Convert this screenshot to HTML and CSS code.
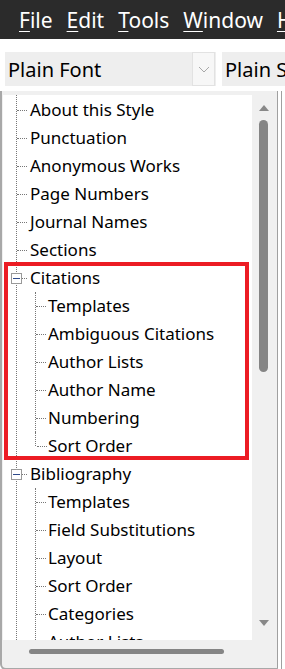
FILE: index.html
```html
<!DOCTYPE html>
<html lang="en">
<head>
    <meta charset="UTF-8">
    <title>Style Editor</title>
    <link rel="stylesheet" href="styles.css">
</head>
<body>
    <div class="menubar">
        <span class="menu"><u>F</u>ile</span>
        <span class="menu"><u>E</u>dit</span>
        <span class="menu"><u>T</u>ools</span>
        <span class="menu"><u>W</u>indow</span>
        <span class="menu"><u>H</u>elp</span>
    </div>

    <div class="toolbar">
        <div class="combo font">
            <span class="combo-text">Plain Font</span>
            <span class="combo-btn">
                <svg width="12" height="7" viewBox="0 0 12 7"><path d="M1 1 L6 6 L11 1" fill="none" stroke="#a8a8a8" stroke-width="1"/></svg>
            </span>
        </div>
        <div class="combo size">
            <span class="combo-text">Plain Size</span>
        </div>
    </div>

    <div class="frame">
        <div class="pane">
            <div class="tree">
                <ul class="root">
                    <li><span>About this Style</span></li>
                    <li><span>Punctuation</span></li>
                    <li><span>Anonymous Works</span></li>
                    <li><span>Page Numbers</span></li>
                    <li><span>Journal Names</span></li>
                    <li><span>Sections</span></li>
                    <li class="open">
                        <i class="toggle"></i><span>Citations</span>
                        <ul class="sub">
                            <li><span>Templates</span></li>
                            <li><span>Ambiguous Citations</span></li>
                            <li><span>Author Lists</span></li>
                            <li><span>Author Name</span></li>
                            <li><span>Numbering</span></li>
                            <li class="last"><span>Sort Order</span></li>
                        </ul>
                    </li>
                    <li class="open">
                        <i class="toggle"></i><span>Bibliography</span>
                        <ul class="sub">
                            <li><span>Templates</span></li>
                            <li><span>Field Substitutions</span></li>
                            <li><span>Layout</span></li>
                            <li><span>Sort Order</span></li>
                            <li><span>Categories</span></li>
                            <li><span>Author Lists</span></li>
                        </ul>
                    </li>
                </ul>
                <div class="highlight"></div>
            </div>
            <div class="vscroll">
                <span class="arrow up"></span>
                <span class="vthumb"></span>
                <span class="arrow down"></span>
            </div>
        </div>
        <div class="hscroll">
            <span class="hthumb"></span>
        </div>
    </div>
</body>
</html>
```

FILE: styles.css
```css
body {
    margin: 0;
    width: 285px;
    height: 669px;
    overflow: hidden;
    background: #fff;
    font-family: "Noto Sans", "Open Sans", sans-serif;
    color: #000;
}

.menubar {
    height: 39px;
    background: #2b2b2b;
    color: #fff;
    display: flex;
    align-items: center;
    gap: 14px;
    padding-left: 19px;
    font-size: 21px;
    white-space: nowrap;
    overflow: hidden;
}

.menu u {
    text-underline-offset: 3px;
    text-decoration-thickness: 1px;
}

.toolbar {
    height: 39px;
    display: flex;
    align-items: flex-start;
    gap: 6px;
    padding: 13px 0 0 5px;
    white-space: nowrap;
    overflow: hidden;
}

.combo {
    height: 34px;
    background: #eeeeee;
    display: flex;
    align-items: center;
    font-size: 20px;
    flex-shrink: 0;
}

.combo.font {
    width: 211px;
}

.combo.size {
    width: 120px;
}

.combo-text {
    flex: 1;
    padding-left: 3px;
}

.combo-btn {
    width: 21px;
    height: 32px;
    margin-right: 1px;
    background: #f7f7f7;
    border: 1px solid #e2e2e2;
    display: flex;
    align-items: center;
    justify-content: center;
}

.frame {
    background: #f0f0f0;
    border-left: 2px solid #a8a8a8;
    border-right: 1px solid #a0a0a0;
    border-bottom: 2px solid #a8a8a8;
    border-bottom-left-radius: 6px;
    width: 275px;
    height: 573px;
    padding-top: 4px;
    box-shadow: 3px 0 0 #fff, 4px 0 0 #a0a0a0;
}

.pane {
    display: flex;
    height: 545px;
    margin-left: 1px;
}

.tree {
    position: relative;
    width: 249px;
    background: #fff;
    overflow: hidden;
    font-size: 17px;
}

.tree ul {
    list-style: none;
    margin: 0;
    padding: 0;
}

.root {
    margin-left: 13px !important;
    border-left: 1px dotted #777;
    padding-top: 2px !important;
    margin-top: -1px !important;
}

.tree li {
    position: relative;
    line-height: 28px;
    padding-left: 13px;
    white-space: nowrap;
}

.tree li::before {
    content: "";
    position: absolute;
    left: 0;
    top: 14px;
    width: 10px;
    border-top: 1px dotted #777;
}

.sub {
    margin-left: 5px !important;
    border-left: 1px dotted #777;
    position: relative;
}

.sub li {
    padding-left: 12px;
}

.sub li.last {
    border-left: 1px solid #fff;
    margin-left: -1px;
}

.sub li.last::before {
    left: 1px;
}

.sub li.last::after {
    content: "";
    position: absolute;
    left: -1px;
    top: 0;
    height: 14px;
    border-left: 1px dotted #777;
}

.toggle {
    position: absolute;
    left: -6px;
    top: 9px;
    width: 9px;
    height: 9px;
    background: #fff;
    border: 1px solid #999;
    z-index: 1;
}

.toggle::after {
    content: "";
    position: absolute;
    left: 1px;
    top: 4px;
    width: 7px;
    height: 1px;
    background: #2e4a8a;
}

.highlight {
    position: absolute;
    left: 1px;
    top: 167px;
    width: 237px;
    height: 190px;
    border: 4px solid #ec1c24;
}

.vscroll {
    width: 24px;
    position: relative;
    background: #f0f0f0;
}

.arrow {
    position: absolute;
    left: 7px;
    width: 0;
    height: 0;
    border-left: 5px solid transparent;
    border-right: 5px solid transparent;
}

.arrow.up {
    top: 10px;
    border-bottom: 6px solid #888;
}

.arrow.down {
    bottom: 14px;
    border-top: 6px solid #888;
}

.vthumb {
    position: absolute;
    left: 7px;
    top: 25px;
    width: 9px;
    height: 252px;
    background: #858585;
    border-radius: 5px;
}

.hscroll {
    height: 28px;
    position: relative;
}

.hthumb {
    position: absolute;
    left: 27px;
    top: 9px;
    width: 195px;
    height: 5px;
    background: #858585;
    border-radius: 3px;
}
```
